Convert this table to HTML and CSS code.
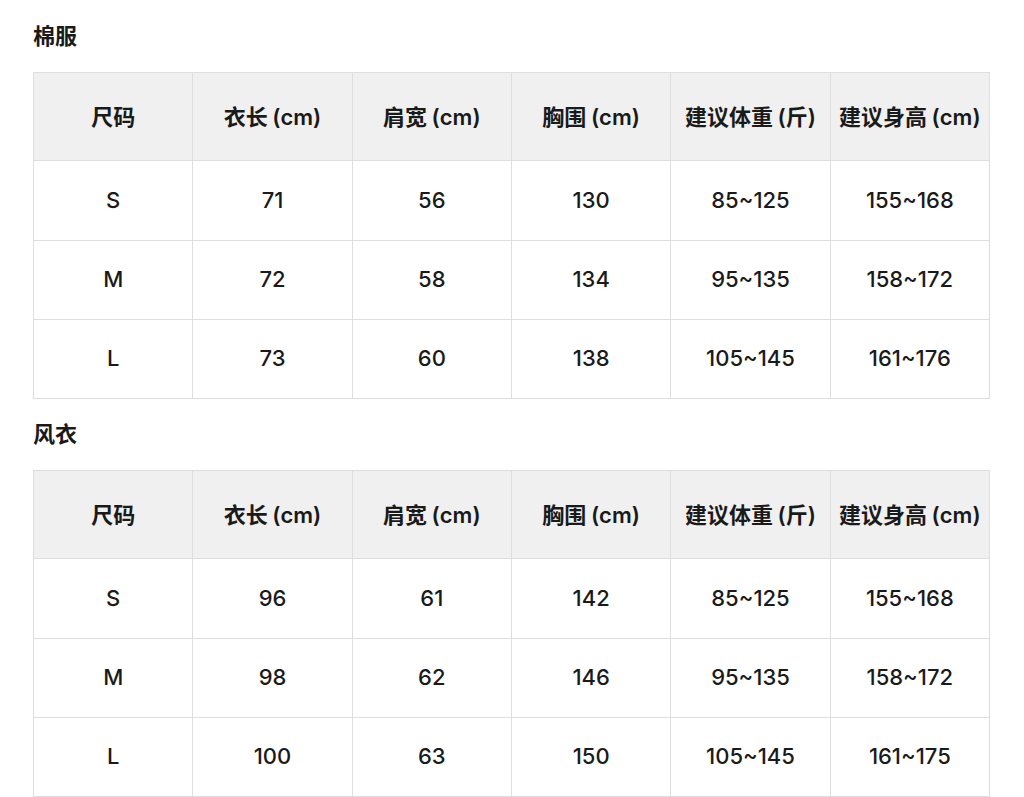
FILE: index.html
```html
<!DOCTYPE html>
<html lang="zh-CN">
<head>
<meta charset="utf-8">
<link rel="stylesheet" href="styles.css">
</head>
<body>
<section class="block">
  <h2 class="title">棉服</h2>
  <table class="size-table">
    <thead>
      <tr><th>尺码</th><th>衣长 (cm)</th><th>肩宽 (cm)</th><th>胸围 (cm)</th><th>建议体重 (斤)</th><th>建议身高 (cm)</th></tr>
    </thead>
    <tbody>
      <tr><td>S</td><td>71</td><td>56</td><td>130</td><td>85~125</td><td>155~168</td></tr>
      <tr><td>M</td><td>72</td><td>58</td><td>134</td><td>95~135</td><td>158~172</td></tr>
      <tr><td>L</td><td>73</td><td>60</td><td>138</td><td>105~145</td><td>161~176</td></tr>
    </tbody>
  </table>
</section>
<section class="block">
  <h2 class="title">风衣</h2>
  <table class="size-table">
    <thead>
      <tr><th>尺码</th><th>衣长 (cm)</th><th>肩宽 (cm)</th><th>胸围 (cm)</th><th>建议体重 (斤)</th><th>建议身高 (cm)</th></tr>
    </thead>
    <tbody>
      <tr><td>S</td><td>96</td><td>61</td><td>142</td><td>85~125</td><td>155~168</td></tr>
      <tr><td>M</td><td>98</td><td>62</td><td>146</td><td>95~135</td><td>158~172</td></tr>
      <tr><td>L</td><td>100</td><td>63</td><td>150</td><td>105~145</td><td>161~175</td></tr>
    </tbody>
  </table>
</section>
</body>
</html>
```

FILE: styles.css
```css
html, body {
  margin: 0;
  background: #ffffff;
}
body {
  padding: 21px 34px 0 33px;
  font-family: Inter, "Noto Sans CJK SC", sans-serif;
  color: #1a1a1a;
}
.block {
  margin-bottom: 20px;
}
.title {
  margin: 0 0 21px;
  font-size: 22px;
  line-height: 30px;
  font-weight: 700;
}
.size-table {
  width: 957px;
  table-layout: fixed;
  border-collapse: collapse;
}
.size-table th,
.size-table td {
  border: 1px solid #dedede;
  text-align: center;
  padding: 0;
  font-size: 22px;
  word-spacing: -1px;
}
.size-table th {
  height: 84px;
  padding-bottom: 3px;
  background: #f0f0f0;
  font-weight: 600;
}
.size-table td {
  height: 76px;
  padding-bottom: 2px;
  font-weight: 500;
}
.size-table tbody tr:first-child td {
  height: 77px;
}
```
